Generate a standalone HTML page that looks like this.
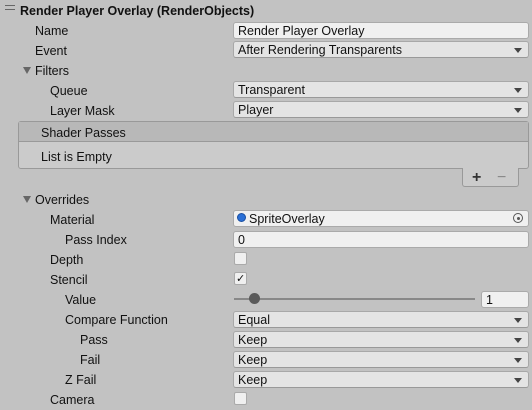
<!DOCTYPE html><html><head><style>
body{margin:0;width:532px;height:410px;background:#c2c2c2;font-family:"Liberation Sans",sans-serif;font-size:12.5px;color:#111;position:relative;overflow:hidden}
.a{position:absolute;white-space:nowrap}
.l{position:absolute;white-space:nowrap;line-height:14px;margin-top:1px}
.f{position:absolute;left:233px;width:296px;height:17px;box-sizing:border-box;border:1px solid #aaa;border-radius:3px;background:#f0f0f0;line-height:16px;padding-left:4px}
.d{background:#e4e4e4;border-color:#a8a8a8;border-bottom-color:#999}
.d:after{content:"";position:absolute;right:6px;top:6px;border-left:4px solid transparent;border-right:4px solid transparent;border-top:5px solid #444}
.c{position:absolute;left:234px;width:13px;height:13px;background:#f0f0f0;border:1px solid #aaa;border-radius:2px;box-sizing:border-box}
.t{position:absolute;border-left:4px solid transparent;border-right:4px solid transparent;border-top:7px solid #666}
</style></head><body>
<div class="a" style="left:5px;top:5px;width:10px;height:3px;border-top:1px solid #666;border-bottom:1px solid #666"></div>
<div class="l" style="left:20px;top:3px;font-weight:bold">Render Player Overlay (RenderObjects)</div>
<div class="l" style="left:35px;top:23px">Name</div><div class="f" style="top:22px">Render Player Overlay</div>
<div class="l" style="left:35px;top:43px">Event</div><div class="f d" style="top:41px">After Rendering Transparents</div>
<div class="t" style="left:23px;top:67px"></div><div class="l" style="left:35px;top:63px">Filters</div>
<div class="l" style="left:50px;top:83px">Queue</div><div class="f d" style="top:81px">Transparent</div>
<div class="l" style="left:50px;top:103px">Layer Mask</div><div class="f d" style="top:101px">Player</div>
<div class="a" style="left:18px;top:121px;width:511px;height:48px;border:1px solid #999;border-radius:3px;background:#cbcbcb;box-sizing:border-box"></div>
<div class="a" style="left:19px;top:122px;width:509px;height:19px;background:#b8b8b8;border-bottom:1px solid #999"></div>
<div class="l" style="left:41px;top:125px">Shader Passes</div>
<div class="l" style="left:41px;top:149px">List is Empty</div>
<div class="a" style="left:462px;top:168px;width:57px;height:19px;background:#cbcbcb;border:1px solid #999;border-top:none;border-radius:0 0 3px 3px;box-sizing:border-box"></div>
<div class="l" style="left:472px;top:170px;font-size:16px;font-weight:bold;color:#333">+</div>
<div class="l" style="left:497px;top:170px;font-size:16px;color:#888">−</div>
<div class="t" style="left:23px;top:196px"></div><div class="l" style="left:35px;top:192px">Overrides</div>
<div class="l" style="left:50px;top:212px">Material</div><div class="f" style="top:210px;padding-left:15px">SpriteOverlay</div>
<div class="a" style="left:237px;top:213px;width:9px;height:9px;border-radius:50%;background:#2a6fd6;border:1px solid #1a4fa0;box-sizing:border-box"></div>
<div class="a" style="left:513px;top:213px;width:10px;height:10px;border-radius:50%;border:1px solid #555;box-sizing:border-box"></div><div class="a" style="left:516.5px;top:216.5px;width:3px;height:3px;border-radius:50%;background:#555"></div>
<div class="l" style="left:65px;top:232px">Pass Index</div><div class="f" style="top:231px">0</div>
<div class="l" style="left:50px;top:252px">Depth</div><div class="c" style="top:252px"></div>
<div class="l" style="left:50px;top:272px">Stencil</div><div class="c" style="top:272px"></div><div class="l" style="left:236px;top:271px;font-size:11px">✓</div>
<div class="l" style="left:65px;top:292px">Value</div>
<div class="a" style="left:234px;top:298px;width:241px;height:2px;background:#888"></div>
<div class="a" style="left:249px;top:293px;width:11px;height:11px;border-radius:50%;background:#5a5a5a"></div>
<div class="f" style="left:481px;width:48px;top:291px">1</div>
<div class="l" style="left:65px;top:312px">Compare Function</div><div class="f d" style="top:311px">Equal</div>
<div class="l" style="left:80px;top:332px">Pass</div><div class="f d" style="top:331px">Keep</div>
<div class="l" style="left:80px;top:352px">Fail</div><div class="f d" style="top:351px">Keep</div>
<div class="l" style="left:65px;top:372px">Z Fail</div><div class="f d" style="top:371px">Keep</div>
<div class="l" style="left:50px;top:392px">Camera</div><div class="c" style="top:392px"></div>
</body></html>
